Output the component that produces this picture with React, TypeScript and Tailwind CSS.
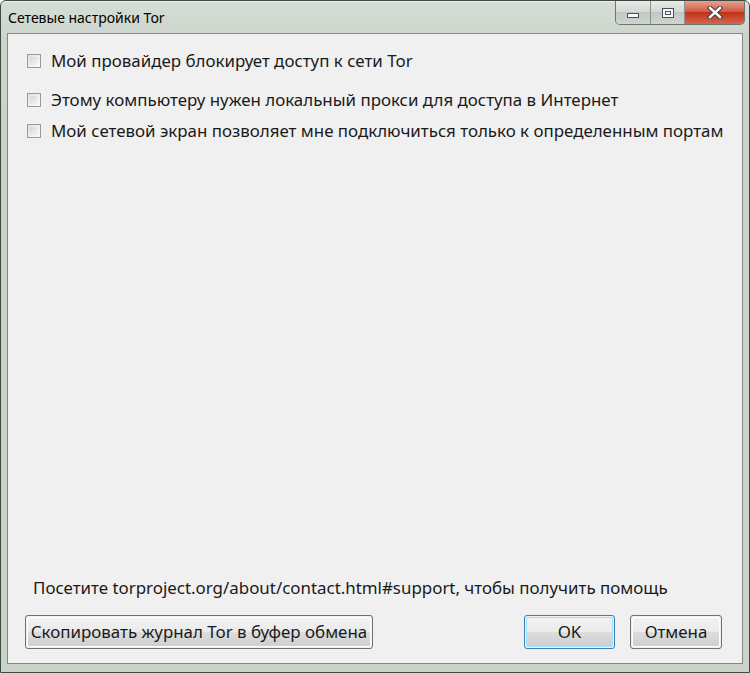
import React from "react";

const font = { fontFamily: '"Segoe UI", "Noto Sans", "Open Sans", sans-serif' };

function Check({ label }: { label: string }) {
  return (
    <div className="flex items-center h-[20px]">
      <div className="w-[14px] h-[14px] border border-[#9a9a9a] bg-gradient-to-br from-[#e2e2e2] to-[#fbfbfb] p-[2px] shrink-0">
        <div className="w-full h-full bg-gradient-to-br from-[#d3d6da] to-[#f6f6f6]" />
      </div>
      <span className="ml-[10px] text-[16.9px] text-[#1a1a1a] leading-none whitespace-nowrap">{label}</span>
    </div>
  );
}

function Btn({ children, w, def }: { children: React.ReactNode; w: string; def?: boolean }) {
  return (
    <div
      className={`${w} h-[34px] rounded-[3px] border ${def ? "border-[#3c7fb1]" : "border-[#707070]"} p-[1px]`}
    >
      <div
        className={`w-full h-full rounded-[2px] border ${def ? "border-[#a6e1fb]" : "border-[#fcfcfc]"} flex items-center justify-center text-[16.9px] text-[#1a1a1a] bg-[linear-gradient(to_bottom,#f2f2f2_0%,#ebebeb_50%,#dddddd_50%,#cfcfcf_100%)]`}
      >
        {children}
      </div>
    </div>
  );
}

export default function App() {
  return (
    <div className="w-[750px] h-[673px] bg-white" style={font}>
      <div className="w-[750px] h-[673px] border border-[#3d4a42] rounded-t-[6px] bg-[linear-gradient(to_bottom,#d6ddd6,#cbd4cb_40px,#c9d3ca)] flex flex-col">
        {/* Title bar */}
        <div className="h-[32px] flex items-start border-t border-[#eef2ee] rounded-t-[6px] relative shrink-0">
          <span className="ml-[7px] mt-[9px] text-[14px] text-black leading-none">Сетевые настройки Tor</span>
          <div className="absolute right-[4px] top-[-1px] flex h-[24px] rounded-b-[5px] border border-t-0 border-[#6d7670] overflow-hidden">
            <div className="w-[35px] h-full bg-[linear-gradient(to_bottom,#e8ebe8,#d2d7d3_50%,#c1c7c2_50%,#cfd4d0)] border-r border-[#8b938d] flex items-center justify-center">
              <div className="w-[12px] h-[5px] border border-[#4a5058] bg-[#f8f8f8] mt-[6px]" />
            </div>
            <div className="w-[34px] h-full bg-[linear-gradient(to_bottom,#e8ebe8,#d2d7d3_50%,#c1c7c2_50%,#cfd4d0)] border-r border-[#8b938d] flex items-center justify-center">
              <div className="w-[12px] h-[10px] border border-[#4a5058] bg-[#f8f8f8] flex items-center justify-center">
                <div className="w-[6px] h-[4px] border border-[#4a5058]" />
              </div>
            </div>
            <div className="w-[59px] h-full bg-[linear-gradient(to_bottom,#e5a393,#d2533c_50%,#c0321b_50%,#d5654a)] flex items-center justify-center">
              <svg width="16" height="13" viewBox="0 0 16 13">
                <path d="M3 2 L13 11 M13 2 L3 11" stroke="#3c3f45" strokeWidth="4.4" strokeLinecap="square" />
                <path d="M3 2 L13 11 M13 2 L3 11" stroke="#ffffff" strokeWidth="2.4" strokeLinecap="square" />
              </svg>
            </div>
          </div>
        </div>
        {/* Client */}
        <div className="flex-1 mx-[6px] mb-[8px] border border-[#7f8c84] bg-[#f0f0f0] flex flex-col px-[19px]">
          <div className="mt-[17px]">
            <Check label="Мой провайдер блокирует доступ к сети Tor" />
          </div>
          <div className="mt-[19px]">
            <Check label="Этому компьютеру нужен локальный прокси для доступа в Интернет" />
          </div>
          <div className="mt-[11px]">
            <Check label="Мой сетевой экран позволяет мне подключиться только к определенным портам" />
          </div>
          <div className="flex-1" />
          <div className="ml-[6px] text-[16.9px] text-[#1a1a1a] leading-none whitespace-nowrap">
            Посетите torproject.org/about/contact.html#support, чтобы получить помощь
          </div>
          <div className="mt-[18px] mb-[14px] flex items-center">
            <div className="ml-[-2px]">
              <Btn w="w-[348px]">Скопировать журнал Tor в буфер обмена</Btn>
            </div>
            <div className="flex-1" />
            <Btn w="w-[91px]" def>OK</Btn>
            <div className="ml-[15px] mr-[1px]">
              <Btn w="w-[92px]">Отмена</Btn>
            </div>
          </div>
        </div>
      </div>
    </div>
  );
}
